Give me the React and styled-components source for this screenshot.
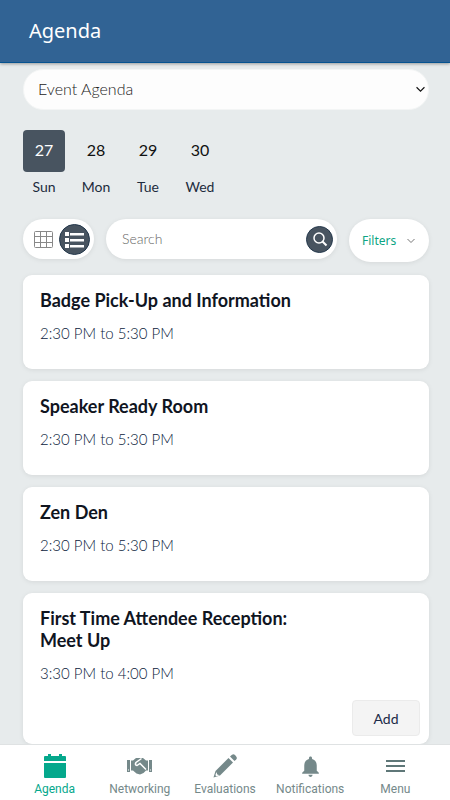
import React, { useState } from "react";
import styled, { createGlobalStyle } from "styled-components";
import { MdNotifications } from "react-icons/md";

const GlobalStyle = createGlobalStyle`
  * {
    box-sizing: border-box;
  }

  body {
    margin: 0;
    background: #e7ebec;
    font-family: Lato, "Open Sans", sans-serif;
  }

  button, input, select {
    font-family: inherit;
    margin: 0;
  }
`;

const Page = styled.div`
  display: flex;
  flex-direction: column;
  height: 100vh;
`;

const Header = styled.header`
  flex: none;
  padding: 17px 29px;
  background: #316394;
  border-bottom: 1px solid #065390;
  box-shadow: 0 1px 3px rgba(0, 0, 0, 0.35);
  z-index: 1;
`;

const PageTitle = styled.h1`
  margin: 0;
  color: #fff;
  font-family: "Noto Sans", sans-serif;
  font-size: 20px;
  font-weight: 400;
  line-height: 28px;
`;

const Content = styled.main`
  flex: 1;
  min-height: 0;
  overflow-y: auto;
  scrollbar-width: none;
  padding: 6px 21px 0 23px;
`;

const SelectWrap = styled.div`
  position: relative;

  svg {
    position: absolute;
    top: 16px;
    right: 4px;
    pointer-events: none;
  }
`;

const AgendaSelect = styled.select`
  appearance: none;
  display: block;
  width: 100%;
  height: 41px;
  padding: 0 20px 2px 14px;
  border: 1px solid #f3f5f5;
  border-radius: 20px;
  background: #fdfdfd;
  color: #222;
  font-size: 16px;
  font-weight: 300;
`;

const Days = styled.div`
  display: flex;
  gap: 10px;
  margin: 20px 0 22px;
`;

const Day = styled.button`
  width: 42px;
  padding: 0;
  border: none;
  background: none;
  color: #1d2b3d;
  font-size: 14px;
  line-height: 20px;
`;

const DayNumber = styled.span`
  display: block;
  height: 42px;
  margin-bottom: 5px;
  border-radius: 4px;
  background: ${(props) => (props.$active ? "#485460" : "transparent")};
  color: ${(props) => (props.$active ? "#fff" : "#111")};
  font-size: 16px;
  line-height: 40px;
`;

const Toolbar = styled.div`
  display: flex;
  align-items: flex-start;
  gap: 12px;
  margin-bottom: 13px;
`;

const Pill = styled.div`
  display: flex;
  align-items: center;
  height: 40px;
  border-radius: 20px;
  background: #fff;
  box-shadow: 0 1px 5px rgba(0, 0, 0, 0.08);
`;

const ViewToggle = styled(Pill)`
  flex: none;
  gap: 4px;
  padding: 0 4px 0 8px;
`;

const SearchBox = styled(Pill)`
  flex: 1;
  min-width: 0;
  padding: 0 4px 0 16px;
`;

const SearchInput = styled.input`
  flex: 1;
  min-width: 0;
  padding: 0 0 2px;
  border: none;
  outline: none;
  background: none;
  font-size: 14px;
  font-weight: 300;

  &::placeholder {
    color: #666;
  }
`;

const RoundButton = styled.button`
  display: flex;
  align-items: center;
  justify-content: center;
  flex: none;
  width: ${(props) => props.$size}px;
  height: ${(props) => props.$size}px;
  padding: 0;
  border: ${(props) => (props.$filled ? "1px solid #24384c" : "none")};
  border-radius: 50%;
  background: ${(props) => (props.$filled ? "#485460" : "none")};
  color: ${(props) => (props.$filled ? "#fff" : "#888")};
`;

const FilterButton = styled.button`
  display: flex;
  align-items: center;
  justify-content: space-between;
  flex: none;
  width: 80px;
  height: 43px;
  padding: 0 14px 0 13px;
  border: none;
  border-radius: 22px;
  background: #fff;
  box-shadow: 0 1px 5px rgba(0, 0, 0, 0.08);
  color: #0da584;
  font-family: "Noto Sans", sans-serif;
  font-size: 12px;
`;

const SessionList = styled.div`
  display: flex;
  flex-direction: column;
  gap: 12px;
`;

const Card = styled.article`
  display: flex;
  flex-direction: column;
  min-height: 94px;
  padding: 14px 9px 8px 17px;
  border-radius: 9px;
  background: #fff;
  box-shadow: 0 1px 5px rgba(0, 0, 0, 0.08);
`;

const SessionTitle = styled.h2`
  max-width: 280px;
  margin: 0 0 12px;
  color: #10151f;
  font-size: 18px;
  font-weight: 700;
  line-height: 22px;
`;

const SessionTime = styled.p`
  margin: 0;
  color: #0b1b3c;
  font-size: 15px;
  font-weight: 300;
  line-height: 20px;
`;

const AddButton = styled.button`
  align-self: flex-end;
  width: 68px;
  height: 36px;
  margin-top: 17px;
  padding: 0;
  border: 1px solid #ebebeb;
  border-radius: 4px;
  background: #f4f4f4;
  color: #1b2b48;
  font-size: 14px;
`;

const BottomNav = styled.nav`
  display: flex;
  flex: none;
  height: 56px;
  padding: 0 12px;
  border-top: 1px solid #dfe2e3;
  background: #fff;
`;

const NavItem = styled.a`
  display: flex;
  flex: 1 1 0;
  flex-direction: column;
  align-items: center;
  min-width: 0;
  padding-top: 8px;
  color: ${(props) => (props.$active ? "#05a88c" : "#75898a")};
  font-family: Roboto, sans-serif;
  font-size: 12px;
  line-height: 16px;
  text-decoration: none;
`;

const NavIcon = styled.span`
  display: flex;
  align-items: center;
  justify-content: center;
  height: 26px;
  margin-bottom: 2px;
`;

const ChevronIcon = ({ size = 8, color = "#777" }) => (
  <svg width={size} height={size} viewBox="0 0 8 8" fill="none" stroke={color}>
    <path d="M0.5 2L4 5.5 7.5 2" />
  </svg>
);

const GridIcon = () => (
  <svg width="19" height="17" viewBox="0 0 19 17" fill="none" stroke="currentColor">
    <rect x="0.5" y="0.5" width="18" height="16" rx="1" />
    <path d="M6.5 0.5v16M12.5 0.5v16M0.5 5.5h18M0.5 11.5h18" />
  </svg>
);

const ListIcon = () => (
  <svg width="20" height="17" viewBox="0 0 20 17" fill="currentColor">
    <path d="M0 1h4v4H0zM0 7h4v4H0zM0 13h4v4H0zM5 2h14v2.5H5zM5 8h14v2.5H5zM5 14h14v2.5H5z" />
  </svg>
);

const SearchIcon = () => (
  <svg width="16" height="16" viewBox="0 0 16 16" fill="none" stroke="currentColor">
    <circle cx="7" cy="7" r="5" strokeWidth="1.5" />
    <path d="M10.5 10.5l4 4" strokeWidth="2" />
  </svg>
);

const CalendarIcon = () => (
  <svg width="22" height="26" viewBox="0 0 22 26" fill="currentColor">
    <path d="M0 4q0-1 1-1h3V1h3v2h8V1h3v2h3q1 0 1 1v4H0zM0 10h22v14q0 1-1 1H1q-1 0-1-1z" />
  </svg>
);

const HandshakeIcon = () => (
  <svg width="25" height="18" viewBox="0 0 25 18" fill="currentColor">
    <path d="M0 3h3v12H0zM22 3h3v12h-3z" />
    <path d="M4 3.5h2L9 1h7l3 2.5h2v10h-2L16.500 16 13 17.500 9.500 16.500 6 13.500H4z" />
    <path
      d="M14.500 1.500L9 5.500Q7.500 8 10 8.500L13 6.500 19 12.500"
      fill="none"
      stroke="#fff"
      strokeWidth="1.500"
    />
    <path d="M1.500 12.500v1M23.500 12.500v1" stroke="#fff" />
  </svg>
);

const PencilIcon = () => (
  <svg width="24" height="24" viewBox="0 0 24 24" fill="currentColor">
    <path d="M17 2.500L19 .8q1.500-1.200 3 .3l1.200 1.300q1.300 1.500 0 3L21.500 7z" />
    <path d="M15.500 4L20 8.500 7 21.500 0.500 23.500 2.500 17z" />
    <path d="M3.300 18l1 2.500 2.500.8-3.400 1-1-1z" fill="#fff" />
  </svg>
);

const MenuIcon = () => (
  <svg width="20" height="14" viewBox="0 0 20 14" fill="#5f7778">
    <path d="M1 1h19v2H1zM1 6h19v2H1zM1 11h19v2H1z" />
  </svg>
);

const days = [
  { number: 27, name: "Sun" },
  { number: 28, name: "Mon" },
  { number: 29, name: "Tue" },
  { number: 30, name: "Wed" },
];

const sessions = [
  { title: "Badge Pick-Up and Information", time: "2:30 PM to 5:30 PM" },
  { title: "Speaker Ready Room", time: "2:30 PM to 5:30 PM" },
  { title: "Zen Den", time: "2:30 PM to 5:30 PM" },
  {
    title: "First Time Attendee Reception: Meet Up",
    time: "3:30 PM to 4:00 PM",
    canAdd: true,
  },
];

const navItems = [
  { label: "Agenda", icon: <CalendarIcon />, active: true },
  { label: "Networking", icon: <HandshakeIcon /> },
  { label: "Evaluations", icon: <PencilIcon /> },
  { label: "Notifications", icon: <MdNotifications size={25} /> },
  { label: "Menu", icon: <MenuIcon /> },
];

export default function App() {
  const [activeDay, setActiveDay] = useState(27);
  const [view, setView] = useState("list");
  const [search, setSearch] = useState("");

  return (
    <Page>
      <GlobalStyle />
      <Header>
        <PageTitle>Agenda</PageTitle>
      </Header>
      <Content>
        <SelectWrap>
          <AgendaSelect aria-label="Agenda">
            <option>Event Agenda</option>
          </AgendaSelect>
          <ChevronIcon size={9} color="#111" />
        </SelectWrap>
        <Days>
          {days.map((day) => (
            <Day key={day.number} onClick={() => setActiveDay(day.number)}>
              <DayNumber $active={day.number === activeDay}>{day.number}</DayNumber>
              {day.name}
            </Day>
          ))}
        </Days>
        <Toolbar>
          <ViewToggle>
            <RoundButton
              aria-label="Grid view"
              $size={view === "grid" ? 31 : 24}
              $filled={view === "grid"}
              onClick={() => setView("grid")}
            >
              <GridIcon />
            </RoundButton>
            <RoundButton
              aria-label="List view"
              $size={view === "list" ? 31 : 24}
              $filled={view === "list"}
              onClick={() => setView("list")}
            >
              <ListIcon />
            </RoundButton>
          </ViewToggle>
          <SearchBox>
            <SearchInput
              aria-label="Search"
              placeholder="Search"
              value={search}
              onChange={(e) => setSearch(e.target.value)}
            />
            <RoundButton aria-label="Submit search" $size={27} $filled>
              <SearchIcon />
            </RoundButton>
          </SearchBox>
          <FilterButton>
            Filters
            <ChevronIcon />
          </FilterButton>
        </Toolbar>
        <SessionList>
          {sessions.map((session) => (
            <Card key={session.title}>
              <SessionTitle>{session.title}</SessionTitle>
              <SessionTime>{session.time}</SessionTime>
              {session.canAdd && <AddButton>Add</AddButton>}
            </Card>
          ))}
        </SessionList>
      </Content>
      <BottomNav>
        {navItems.map((item) => (
          <NavItem key={item.label} href="#" $active={item.active}>
            <NavIcon>{item.icon}</NavIcon>
            {item.label}
          </NavItem>
        ))}
      </BottomNav>
    </Page>
  );
}
